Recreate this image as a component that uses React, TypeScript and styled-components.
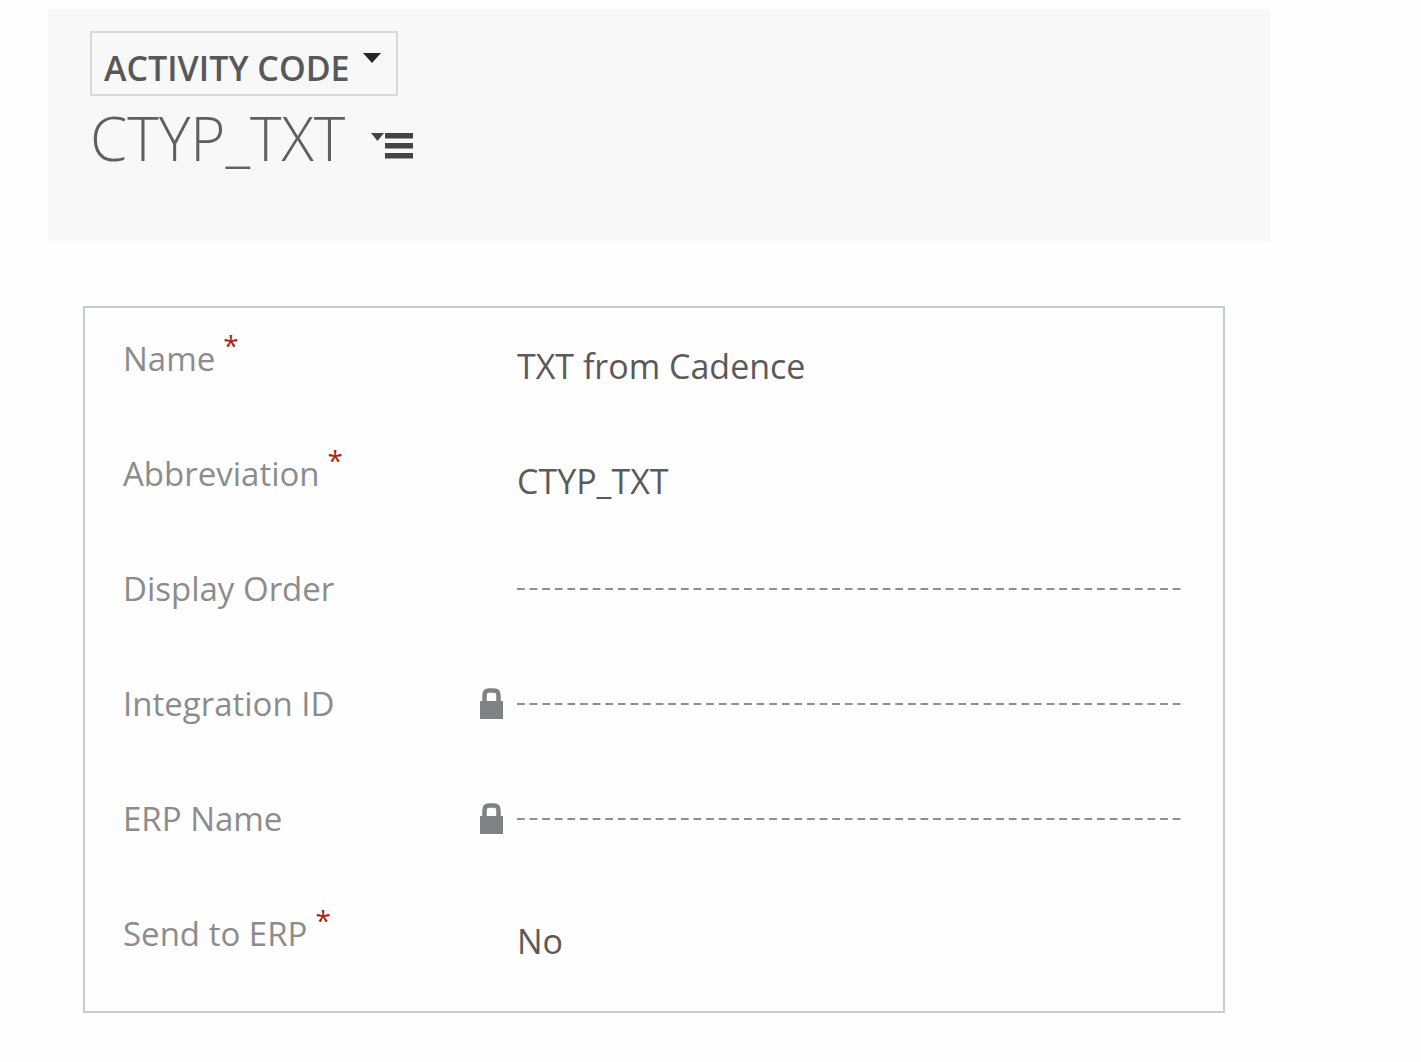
import React from "react";
import styled, { createGlobalStyle } from "styled-components";

const GlobalStyle = createGlobalStyle`
  * { box-sizing: border-box; }
  body {
    margin: 0;
    background: #fefefe;
    font-family: "Open Sans", "Noto Sans", sans-serif;
  }
`;

const Page = styled.main`
  padding: 9px 151px 49px 48px;
`;

const Header = styled.header`
  display: flex;
  flex-direction: column;
  align-items: flex-start;
  min-height: 232px;
  padding: 22px 42px;
  background: #f8f8f8;
`;

const EntityButton = styled.button`
  display: flex;
  align-items: center;
  gap: 13px;
  height: 65px;
  padding: 8px 15px 0 12px;
  border: 2px solid #d8d8d8;
  background: transparent;
  color: #585858;
  font: 600 34px/48px "Open Sans", "Noto Sans", sans-serif;
  white-space: nowrap;

  svg { margin-bottom: 20px; }
`;

const TitleRow = styled.div`
  display: flex;
  align-items: center;
  gap: 26px;
`;

const Title = styled.h1`
  margin: 0;
  color: #606060;
  font-size: 60px;
  font-weight: 300;
  line-height: 84px;
`;

const MenuButton = styled.button`
  display: flex;
  padding: 16px 0 0;
  border: 0;
  background: transparent;
`;

const Card = styled.form`
  display: grid;
  gap: 35px;
  margin: 65px 45px 0 35px;
  padding: 18px 41px 30px 38px;
  border: 2px solid #c8cccb;
`;

const Row = styled.div`
  display: grid;
  grid-template-columns: 357px 37px minmax(0, 1fr);
  align-items: start;
  height: 80px;
`;

const Label = styled.label`
  display: flex;
  gap: 8px;
  color: #8c8c8c;
  font-size: 33px;
  line-height: 66px;
  white-space: nowrap;
`;

const Required = styled.span`
  color: #ad2413;
  font-size: 28px;
  line-height: 38px;
`;

const LockSlot = styled.span`
  display: flex;
  padding-top: 17px;
`;

const TextField = styled.input`
  width: 100%;
  height: 80px;
  padding: 0;
  border: 0;
  outline: 0;
  background: transparent;
  color: #5a5a5a;
  font: 400 34px/48px "Open Sans", "Noto Sans", sans-serif;
`;

const EmptyField = styled(TextField)`
  height: 66px;
  background: linear-gradient(90deg, #8e8e8e 8px, transparent 8px) 0 32px / calc((100% + 4px) / 53) 2px repeat-x;
`;

const ChoiceField = styled.select`
  width: 100%;
  height: 80px;
  padding: 0;
  border: 0;
  outline: 0;
  appearance: none;
  background: transparent;
  color: #5a5a5a;
  font: 400 34px/48px "Open Sans", "Noto Sans", sans-serif;
`;

const LockIcon = () => (
  <svg width="24" height="31" viewBox="0 0 24 31" aria-hidden="true">
    <path d="M4.5 14V7.5Q4.5 2.5 9 2.5H14Q18.5 2.5 18.5 7.5V14" fill="none" stroke="#808185" strokeWidth="4.5" />
    <path d="M0 13H23V31H0Z" fill="#808185" />
  </svg>
);

type Field = {
  id: string;
  label: string;
  value?: string;
  required?: boolean;
  locked?: boolean;
  choice?: boolean;
};

const fields: Field[] = [
  { id: "name", label: "Name", value: "TXT from Cadence", required: true },
  { id: "abbreviation", label: "Abbreviation", value: "CTYP_TXT", required: true },
  { id: "display-order", label: "Display Order" },
  { id: "integration-id", label: "Integration ID", locked: true },
  { id: "erp-name", label: "ERP Name", locked: true },
  { id: "send-to-erp", label: "Send to ERP", value: "No", required: true, choice: true },
];

const FieldRow = ({ id, label, value, required, locked, choice }: Field) => (
  <Row>
    <Label htmlFor={id}>
      {label}
      {required && <Required>*</Required>}
    </Label>
    <LockSlot>{locked && <LockIcon />}</LockSlot>
    {choice ? (
      <ChoiceField id={id} defaultValue={value}>
        <option>No</option>
        <option>Yes</option>
      </ChoiceField>
    ) : value ? (
      <TextField id={id} type="text" defaultValue={value} />
    ) : (
      <EmptyField id={id} type="text" readOnly={locked} />
    )}
  </Row>
);

export default function App() {
  return (
    <>
      <GlobalStyle />
      <Page>
        <Header>
          <EntityButton type="button">
            ACTIVITY CODE
            <svg width="18" height="10" viewBox="0 0 18 10" aria-hidden="true">
              <path d="M0 0H18L9 10Z" fill="#262626" />
            </svg>
          </EntityButton>
          <TitleRow>
            <Title>CTYP_TXT</Title>
            <MenuButton type="button" aria-label="Record menu">
              <svg width="44" height="26" viewBox="0 0 44 26" aria-hidden="true">
                <path d="M0 0H13L6.5 8Z M14 0H42V5.5H14Z M14 10H42V15.5H14Z M14 20H42V25.5H14Z" fill="#444" />
              </svg>
            </MenuButton>
          </TitleRow>
        </Header>
        <Card>
          {fields.map((field) => (
            <FieldRow key={field.id} {...field} />
          ))}
        </Card>
      </Page>
    </>
  );
}
